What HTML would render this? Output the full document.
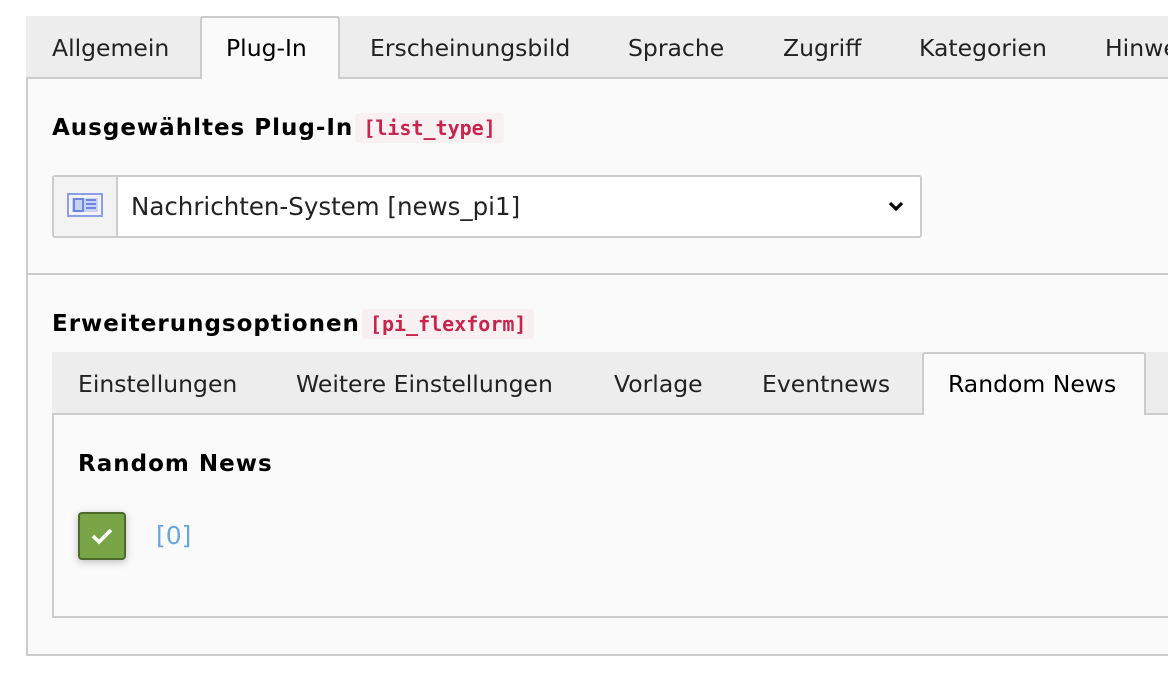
<!DOCTYPE html>
<html><head><meta charset="utf-8"><style>
*{box-sizing:border-box;margin:0;padding:0}
body{width:1168px;height:696px;background:#fff;font-family:"DejaVu Sans","Liberation Sans",sans-serif;color:#222;position:relative;overflow:hidden}
.a{position:absolute;white-space:nowrap}
.t{font-size:23.5px;line-height:26px;color:#222}
.b{font-size:23px;font-weight:bold;color:#000;line-height:28px;letter-spacing:1px}
.code{font-family:"DejaVu Sans Mono","Liberation Mono",monospace;font-size:20px;letter-spacing:0;color:#c7254e;background:#f9f0f2;padding:3px 8px;border-radius:3px;font-weight:bold}
</style></head><body>
<div class="a" style="left:26px;top:16px;width:1142px;height:63px;background:#ededed;border-bottom:2px solid #ccc"></div>
<div class="a" style="left:200px;top:16px;width:140px;height:64px;background:#fafafa;border:2px solid #ccc;border-bottom:none;border-radius:3px 3px 0 0"></div>
<div class="a t" style="left:52px;top:35px">Allgemein</div>
<div class="a t" style="left:226px;top:35px;color:#000">Plug-In</div>
<div class="a t" style="left:370px;top:35px">Erscheinungsbild</div>
<div class="a t" style="left:628px;top:35px">Sprache</div>
<div class="a t" style="left:783px;top:35px">Zugriff</div>
<div class="a t" style="left:919px;top:35px">Kategorien</div>
<div class="a t" style="left:1105px;top:35px">Hinweise</div>
<div class="a" style="left:26px;top:79px;width:1150px;height:577px;background:#fafafa;border:2px solid #ccc;border-top:none"></div>
<div class="a" style="left:28px;top:273px;width:1140px;height:2px;background:#ccc"></div>
<div class="a b" style="left:52px;top:114px">Ausgewähltes Plug-In<span class="code" style="margin-left:2px">[list_type]</span></div>
<div class="a" style="left:52px;top:175px;width:870px;height:63px;background:#fff;border:2px solid #ccc;border-radius:3px"></div>
<div class="a" style="left:54px;top:177px;width:64px;height:59px;background:#f3f3f3;border-right:2px solid #ccc"></div>
<svg class="a" style="left:67px;top:193px" width="36" height="24" viewBox="0 0 36 24"><rect x="1" y="1" width="34" height="22" fill="none" stroke="#8b9ee8" stroke-width="2"/><rect x="5" y="5" width="26" height="14" fill="#c8d2f4"/><rect x="7" y="6" width="9" height="12" fill="none" stroke="#6d84e0" stroke-width="2"/><path d="M19 7h10M19 11h10M19 15h10" stroke="#6d84e0" stroke-width="2"/></svg>
<div class="a t" style="left:131px;top:194px;font-size:24.5px">Nachrichten-System [news_pi1]</div>
<svg class="a" style="left:887px;top:199px" width="18" height="14" viewBox="0 0 18 14"><path d="M3 4l6 6 6-6" fill="none" stroke="#000" stroke-width="3.2"/></svg>
<div class="a b" style="left:52px;top:310px">Erweiterungsoptionen<span class="code" style="margin-left:2px">[pi_flexform]</span></div>
<div class="a" style="left:52px;top:352px;width:1116px;height:63px;background:#ededed;border-bottom:2px solid #ccc"></div>
<div class="a" style="left:922px;top:352px;width:224px;height:64px;background:#fafafa;border:2px solid #ccc;border-bottom:none;border-radius:3px 3px 0 0"></div>
<div class="a t" style="left:78px;top:371px">Einstellungen</div>
<div class="a t" style="left:296px;top:371px">Weitere Einstellungen</div>
<div class="a t" style="left:614px;top:371px">Vorlage</div>
<div class="a t" style="left:762px;top:371px">Eventnews</div>
<div class="a t" style="left:948px;top:371px;color:#000">Random News</div>
<div class="a" style="left:52px;top:415px;width:1120px;height:203px;border:2px solid #ccc;border-top:none;background:#fafafa"></div>
<div class="a b" style="left:78px;top:450px">Random News</div>
<div class="a" style="left:78px;top:512px;width:48px;height:48px;background:#79a548;border:2px solid #4b6a2b;border-radius:4px;box-shadow:0 2px 8px rgba(0,0,0,.25)"></div>
<svg class="a" style="left:90px;top:525px" width="24" height="22" viewBox="0 0 24 22"><path d="M3 11l6 6 12-12" fill="none" stroke="#fff" stroke-width="3.5"/></svg>
<div class="a t" style="left:156px;top:523px;color:#6aa6dc;font-size:25px">[0]</div>
</body></html>
